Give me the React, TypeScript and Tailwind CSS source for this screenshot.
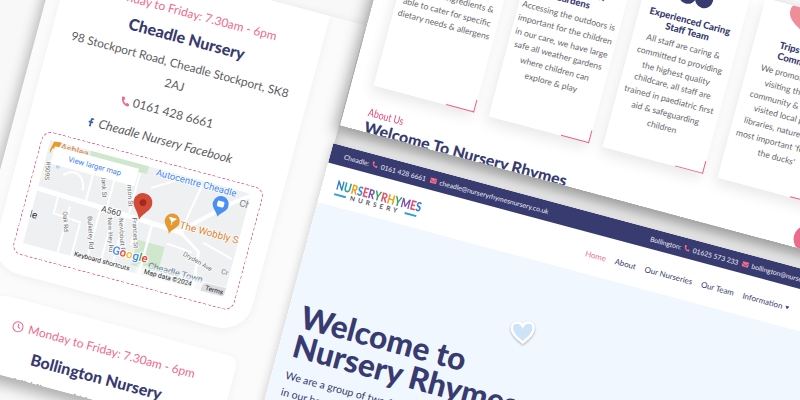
import { FaPhoneAlt, FaEnvelope, FaFacebookF } from "react-icons/fa";
import { FiClock } from "react-icons/fi";

const logoTop = [
  ["N", "text-[#2f7fc9]"],
  ["U", "text-[#21a7a0]"],
  ["R", "text-[#e9a11f]"],
  ["S", "text-[#3c8fd0]"],
  ["E", "text-[#e2506d]"],
  ["R", "text-[#7c4fb0]"],
  ["Y", "text-[#2fa65a]"],
];
const logoRight = [
  ["R", "text-[#e2506d]"],
  ["H", "text-[#e9a11f]"],
  ["Y", "text-[#2fa65a]"],
  ["M", "text-[#7c4fb0]"],
  ["E", "text-[#e2506d]"],
  ["S", "text-[#2f7fc9]"],
];

const labels = [
  { t: "R509S", x: 3, y: 31, r: 80 },
  { t: "Oak Rd", x: 33.6, y: 75.8, r: 72 },
  { t: "Bulkeley Rd", x: 60.6, y: 80, r: 72 },
  { t: "New Hey Rd", x: 80.5, y: 77, r: 72 },
  { t: "Newboult Rd", x: 92, y: 75.6, r: 72 },
  { t: "Frances St", x: 103.8, y: 68.7, r: 72 },
  { t: "Bank St", x: 61.6, y: 32, r: 72 },
  { t: "Hanson St", x: 87.9, y: 30, r: 72 },
  { t: "Dryden Ave", x: 173, y: 81.5, r: 15 },
];

function MapArt() {
  return (
    <svg width="208" height="107" viewBox="0 0 208 107" className="block font-['Roboto',sans-serif]">
      <rect width="208" height="107" fill="#eef0f2" />
      <rect x="42" y="0" width="60" height="8" fill="#cfe7cc" />
      <rect x="110" y="74" width="28" height="26" fill="#cfe7cc" />
      <rect x="0" y="32" width="8" height="8" fill="#fdf3d8" />
      <circle cx="14" cy="24" r="2" fill="#b9d4f5" />
      <g fill="none" stroke="#ffffff" strokeLinecap="round">
        <path d="M0 50 L60 52 L135 55 L150 56" strokeWidth="5" />
        <path d="M148 55 L192 14 L208 2" strokeWidth="4" />
        <path d="M150 56 L172 70 L176 107" strokeWidth="3" />
        <path d="M120 55 L120 107" strokeWidth="2.5" />
        <path d="M22 54 L22 70 L50 72 L50 107 M36 60 L36 107 M66 54 L66 107 M80 54 L80 107 M92 54 L92 107 M105 56 L105 80" strokeWidth="2" />
        <path d="M50 14 L50 50 M72 10 L72 50 M95 10 L95 52 M22 30 C30 22 42 24 44 40 M110 20 L130 8 M158 6 L150 52 M175 60 L205 68 M140 70 L165 72" strokeWidth="2" />
      </g>
      {labels.map((l) => (
        <text
          key={l.t}
          x={l.x}
          y={l.y}
          fontSize="6.5"
          fill="#6b6f75"
          textAnchor="middle"
          transform={`rotate(${l.r} ${l.x} ${l.y})`}
          stroke="#ffffff"
          strokeWidth="1.5"
          paintOrder="stroke"
        >
          {l.t}
        </text>
      ))}
      <text x="-1" y="80" fontSize="10" fill="#333333">le</text>
      <text x="77" y="56" fontSize="8.5" fill="#444444" textAnchor="middle" stroke="#ffffff" strokeWidth="2" paintOrder="stroke">A560</text>
      <text x="152" y="7" fontSize="9.5" fill="#4285f4" textAnchor="middle" stroke="#ffffff" strokeWidth="1.5" paintOrder="stroke">Autocentre Cheadle</text>
      <text x="199" y="15" fontSize="9.5" fill="#7a7f87">Ch</text>
      <text x="199" y="85" fontSize="7" fill="#7a7f87">Cr</text>
      <text x="155" y="99" fontSize="9" fill="#6d7f98" textAnchor="middle">Cheadle Town</text>
      <path d="M2 10 L4 1 L12 -1 L10 6 L4 8 L3 13 Z" fill="#e89a2e" />
      <text x="26" y="7" fontSize="9.5" fill="#d9822b" textAnchor="middle">Ashlea</text>
      {/* blue shop pin */}
      <path d="M181 31 C179 26 173 24 173 18 a8 8 0 1 1 16 0 C189 24 183 26 181 31Z" fill="#4b8ff0" />
      <rect x="177.5" y="15" width="7" height="6" rx="1.5" fill="#ffffff" />
      {/* wobbly pin */}
      <path d="M138.6 60 C136.5 54 131 52 131 47 a7.6 7.6 0 1 1 15.2 0 C146.2 52 141 54 138.6 60Z" fill="#e39a33" />
      <path d="M135 44 L142 44 L138.5 48 Z M138.5 48 L138.5 51" fill="#ffffff" stroke="#ffffff" strokeWidth="0.8" />
      <text x="147" y="52" fontSize="10" fill="#d9822b" stroke="#ffffff" strokeWidth="1.5" paintOrder="stroke">The Wobbly S</text>
      {/* red pin */}
      <path d="M106 54 C103 46 96 43 96 36.7 a9.5 9.5 0 1 1 19 0 C115 43 109 46 106 54Z" fill="#d24a38" />
      <circle cx="105.5" cy="36.7" r="3.4" fill="#a3281a" />
      <text x="106.6" y="94" fontSize="11.5" fontWeight="500" textAnchor="middle" stroke="#ffffff" strokeWidth="2" paintOrder="stroke">
        <tspan fill="#4285f4">G</tspan>
        <tspan fill="#ea4335">o</tspan>
        <tspan fill="#fbbc05">o</tspan>
        <tspan fill="#4285f4">g</tspan>
        <tspan fill="#34a853">l</tspan>
        <tspan fill="#ea4335">e</tspan>
      </text>
      <rect x="116" y="97" width="92" height="10" fill="#ffffff" fillOpacity="0.55" />
      <path d="M184 107 L184 103 Q184 98 189 98 L208 98 L208 103 Q208 107 204 107 Z" fill="#dcdde0" />
      <text x="81" y="106" fontSize="6.6" fill="#222222" textAnchor="middle" stroke="#ffffff" strokeWidth="1.5" paintOrder="stroke">Keyboard shortcuts</text>
      <text x="149" y="105" fontSize="6.6" fill="#222222" textAnchor="middle">Map data ©2024</text>
      <text x="197" y="105" fontSize="6.6" fill="#222222" textAnchor="middle">Terms</text>
      <rect x="6" y="5" width="87" height="18" fill="#ffffff" />
      <text x="49.5" y="16.5" fontSize="7.6" fill="#4285f4" textAnchor="middle">View larger map</text>
    </svg>
  );
}

function NurseryWindow() {
  return (
    <div className="absolute left-[44px] top-[-70px] h-[432px] w-[316px] overflow-hidden bg-[#fbfbfb] pl-[14px] shadow-[-2px_8px_14px_rgba(0,0,0,0.3)]">
      <div className="flex h-[330px] w-[265px] flex-col items-center rounded-br-[30px] rounded-bl-[30px] bg-white pt-[24px] shadow-[0_2px_10px_rgba(0,0,0,0.05)]">
        <p className="text-[12px] leading-[20px] text-[#ef6a8d]">Monday to Friday: 7.30am - 6pm</p>
        <h3 className="mt-[4px] text-[16px] leading-[22px] font-black text-[#383b6f]">Cheadle Nursery</h3>
        <p className="mt-[5px] w-[240px] text-center text-[11.8px] leading-[21px] text-[#5c5c62]">
          98 Stockport Road, Cheadle Stockport, SK8 2AJ
        </p>
        <p className="mt-[8px] flex items-center gap-[3px] text-[12px] leading-[20px] text-[#5c5c62]">
          <FaPhoneAlt className="h-[9px] w-[9px] text-[#ef6a8d]" /> 0161 428 6661
        </p>
        <p className="mt-[9px] flex items-center gap-[3px] text-[12.5px] leading-[20px] text-[#5c5c62] italic">
          <FaFacebookF className="h-[9px] w-[9px] text-[#3f5fa8]" /> Cheadle Nursery Facebook
        </p>
        <div className="mt-[10px] h-[127px] w-[229px] shrink-0 rounded-[10px] border-[1.5px] border-dashed border-[#ee5f88] pt-[7px] pl-[8px]">
          <MapArt />
        </div>
      </div>
      <div className="mt-[24px] flex h-[120px] w-[265px] flex-col items-center rounded-tl-[30px] rounded-tr-[10px] bg-white pt-[17px] shadow-[0_2px_10px_rgba(0,0,0,0.05)]">
        <p className="flex items-center gap-[5px] text-[12px] leading-[20px] text-[#ef6a8d]">
          <FiClock className="h-[12px] w-[12px]" /> Monday to Friday: 7.30am - 6pm
        </p>
        <h3 className="mt-[7px] text-[16px] leading-[22px] font-black text-[#383b6f]">Bollington Nursery</h3>
        <p className="mt-[5px] text-[11.8px] leading-[21px] text-[#5c5c62]">Middlewood House, Bollington</p>
      </div>
    </div>
  );
}

function Cloud() {
  return (
    <svg width="48" height="24" viewBox="0 0 48 24" className="block">
      <circle cx="15" cy="14" r="9" fill="#383b6f" />
      <circle cx="32" cy="14" r="9" fill="#383b6f" />
      <circle cx="24" cy="8" r="8" fill="#383b6f" />
    </svg>
  );
}

function Blob() {
  return (
    <svg width="50" height="32" viewBox="0 0 50 32" className="block">
      <path d="M25 32 C16 26 0 22 0 10 C0 2 10 -2 25 4 C40 -2 50 2 50 10 C50 22 34 26 25 32Z" fill="#ef8d98" />
    </svg>
  );
}

function FeatureCard({ title, lines, icon }: { title: string[]; lines: string[]; icon?: "cloud" | "blob" }) {
  return (
    <div className="relative h-[186px] w-[104px] shrink-0 bg-white pt-[3px] text-center shadow-[-2px_6px_14px_rgba(0,0,0,0.09)]">
      <div className="flex h-[24px] items-end justify-center">
        {icon === "cloud" && <Cloud />}
        {icon === "blob" && <Blob />}
      </div>
      <h4 className="mt-[10px] text-[9.6px] leading-[10.5px] font-black whitespace-nowrap text-[#383b6f]">
        {title.map((t) => (
          <div key={t}>{t}</div>
        ))}
      </h4>
      <div className="mt-[4px] text-[8.6px] leading-[13.8px] whitespace-nowrap text-[#66666b]">
        {lines.map((l) => (
          <div key={l}>{l}</div>
        ))}
      </div>
      <span className="absolute right-0 bottom-0 h-[13px] w-[29px] border-r border-b border-[#ef5c85]" />
    </div>
  );
}

function AboutWindow() {
  return (
    <div className="absolute left-[361px] top-[-200px] h-[233px] w-[620px] overflow-hidden bg-white">
      <div className="flex gap-[14.5px] pl-[22px]">
        <FeatureCard
          title={["Healthy", "Home Cooked"]}
          lines={["Our meals use fresh", "nutritious ingredients &", "able to cater for specific", "dietary needs & allergens"]}
        />
        <FeatureCard
          title={["Large Outdoor", "Gardens"]}
          lines={["Accessing the outdoors is", "important for the children", "in our care, we have large", "safe all weather gardens", "where children can", "explore & play"]}
        />
        <FeatureCard
          icon="cloud"
          title={["Experienced Caring", "Staff Team"]}
          lines={["All staff are caring &", "committed to providing", "the highest quality", "childcare, all staff are", "trained in paediatric first", "aid & safeguarding", "children"]}
        />
        <FeatureCard
          icon="blob"
          title={["Trips To The", "Community"]}
          lines={["We promote visiting", "visiting the local", "community & we have", "visited local parks,", "libraries, nature walks", "most important 'feeding", "the ducks'"]}
        />
      </div>
      <p className="mt-[20px] ml-[24px] origin-left scale-y-[1.25] text-[8.8px] leading-[14px] text-[#e8457a]">About Us</p>
      <h2 className="mt-[-2px] pl-[24px] text-[16px] leading-[20px] font-black text-[#383b6f]">Welcome To Nursery Rhymes</h2>
      <span className="absolute top-[208px] left-[467px] h-[28px] w-[28px] rounded-full bg-[#ec6a8c]" />
    </div>
  );
}

function WebsiteWindow() {
  return (
    <div className="absolute left-[359px] top-[52px] h-[420px] w-[640px] overflow-hidden bg-white">
      <div className="flex h-[20px] items-center bg-[#383b6f] pl-[14px] text-[6.8px] whitespace-nowrap text-[#eeeef5]">
        <div className="flex w-[317px] items-center gap-[3px]">
          <span>Cheadle:</span>
          <FaPhoneAlt className="h-[6px] w-[6px] text-[#ef6a8d]" />
          <span>0161 428 6661</span>
          <FaEnvelope className="ml-[1px] h-[7px] w-[7px] text-[#ef6a8d]" />
          <span>cheadle@nurseryrhymesnursery.co.uk</span>
        </div>
        <div className="flex items-center gap-[3px]">
          <span>Bollington:</span>
          <FaPhoneAlt className="h-[6px] w-[6px] text-[#ef6a8d]" />
          <span>01625 573 233</span>
          <FaEnvelope className="ml-[1px] h-[7px] w-[7px] text-[#ef6a8d]" />
          <span>bollington@nurseryrhymesnursery.co.uk</span>
        </div>
      </div>
      <div className="relative flex h-[41px] items-center pl-[14px]">
        <div className="w-[85px] shrink-0 pt-[6px] text-center">
          <div className="flex scale-y-[1.3] justify-between text-[10px] leading-[11px] font-black">
            {logoTop.map(([c, cls], i) => (
              <span key={i} className={cls}>{c}</span>
            ))}
            <span className="w-[1px]" />
            {logoRight.map(([c, cls], i) => (
              <span key={i} className={cls}>{c}</span>
            ))}
          </div>
          <div className="flex items-center justify-between text-[6.5px] leading-[8px] font-bold tracking-[3.2px] text-[#55555c]">
            <span className="h-[1.5px] w-[12px] bg-[#2f9fd8]" />
            <span>NURSERY</span>
            <span className="h-[1.5px] w-[12px] bg-[#2f9fd8]" />
          </div>
        </div>
        <nav className="ml-[173px] flex items-center gap-[9.2px] pt-[1px] text-[8px] whitespace-nowrap text-[#383b6f]">
          <span className="text-[#f0708f]">Home</span>
          <span>About</span>
          <span>Our Nurseries</span>
          <span>Our Team</span>
          <span className="flex items-center gap-[3px]">
            Information <span className="h-0 w-0 border-x-[2.5px] border-t-[3px] border-x-transparent border-t-[#383b6f]" />
          </span>
        </nav>
      </div>
      <div className="relative h-[360px] bg-[#f0f7fe] pt-[99px] pl-[14px]">
        <h1 className="text-[31.5px] leading-[30px] font-black whitespace-nowrap text-[#383b6f]">
          Welcome to
          <br />
          Nursery Rhymes
        </h1>
        <p className="mt-[8px] text-[10.5px] leading-[17px] whitespace-nowrap text-[#383b6f]">
          We are a group of two family run nurseries
          <br />
          in our beautiful locations
        </p>
        {/* heart decoration, stays upright on the page */}
        <svg width="26" height="24" viewBox="0 0 26 24" className="absolute top-[61px] left-[219px] -rotate-[15deg] drop-shadow-[0_1px_1px_rgba(0,0,0,0.3)]">
          <path d="M13 22 C7 17 2 13 2 7.5 C2 4 4.5 2 7.5 2 C10 2 12 3.5 13 5.5 C14 3.5 16 2 18.5 2 C21.5 2 24 4 24 7.5 C24 13 19 17 13 22Z" fill="#cde3f7" stroke="#ffffff" strokeWidth="2.5" />
        </svg>
      </div>
    </div>
  );
}

export default function App() {
  return (
    <div className="relative h-[400px] w-[800px] overflow-hidden bg-[#f8f8f8] font-['Lato',sans-serif]">
      <div className="absolute top-0 left-0 h-[1px] w-[1000px] origin-top-left rotate-[15deg]">
        <NurseryWindow />
        <div className="absolute left-[361px] top-[-200px] h-[233px] w-[620px] shadow-[-3px_8px_16px_rgba(0,0,0,0.4)]" />
        <AboutWindow />
        <div className="absolute left-[359px] top-[52px] h-[420px] w-[640px] shadow-[-2px_0_8px_rgba(0,0,0,0.15)]" />
        <WebsiteWindow />
      </div>
    </div>
  );
}
